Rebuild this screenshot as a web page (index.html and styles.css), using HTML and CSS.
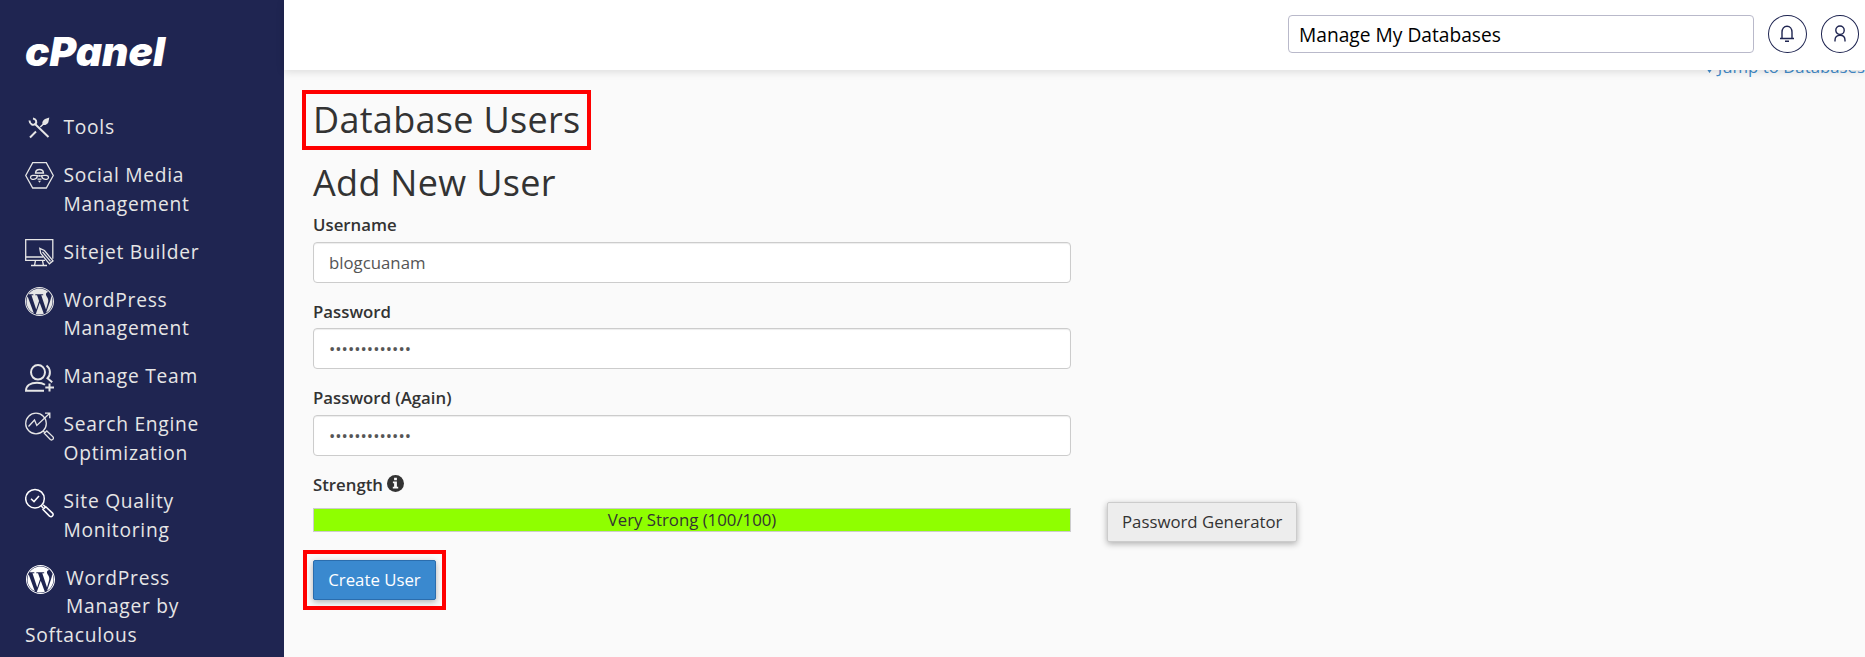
FILE: index.html
```html
<!DOCTYPE html>
<html lang="en">
<head>
    <meta charset="UTF-8">
    <meta name="viewport" content="width=device-width, initial-scale=1.0">
    <title>cPanel - Manage My Databases</title>
    <link rel="stylesheet" href="styles.css">
</head>
<body>
    <!-- shared WordPress mark, used twice in the menu -->
    <svg class="defs" width="0" height="0">
        <symbol id="wp" viewBox="0 0 24 24">
            <path d="M12 0C5.385 0 0 5.385 0 12s5.385 12 12 12 12-5.385 12-12S18.615 0 12 0zm0 .8c6.175 0 11.2 5.025 11.2 11.2S18.175 23.2 12 23.2.8 18.175.8 12 5.825.8 12 .8z"/>
            <path d="M21.469 6.825c.84 1.537 1.318 3.3 1.318 5.175 0 3.979-2.156 7.456-5.363 9.325l3.295-9.527c.615-1.54.82-2.771.82-3.864 0-.405-.026-.78-.07-1.11m-7.981.105c.647-.03 1.232-.105 1.232-.105.582-.075.514-.93-.067-.899 0 0-1.755.135-2.88.135-1.064 0-2.85-.15-2.85-.15-.585-.03-.661.855-.075.885 0 0 .54.061 1.125.09l1.68 4.605-2.37 7.08L5.354 6.9c.649-.03 1.234-.1 1.234-.1.585-.075.516-.93-.065-.896 0 0-1.746.138-2.874.138-.2 0-.438-.008-.69-.015C4.911 3.15 8.235 1.215 12 1.215c2.809 0 5.365 1.072 7.286 2.833-.046-.003-.091-.009-.141-.009-1.06 0-1.812.923-1.812 1.914 0 .89.513 1.643 1.06 2.531.411.72.89 1.643.89 2.977 0 .915-.354 1.994-.821 3.479l-1.075 3.585-3.9-11.61.001.014zM12 22.784c-1.059 0-2.081-.153-3.048-.437l3.237-9.406 3.315 9.087c.024.053.05.101.078.149-1.12.393-2.325.609-3.582.609M1.211 12c0-1.564.336-3.05.935-4.39L7.29 21.709C3.694 19.96 1.212 16.271 1.211 12"/>
        </symbol>
    </svg>

    <div class="sidebar">
        <svg class="logo" viewBox="0 0 142 34">
            <text x="0" y="30.500" textLength="140" lengthAdjust="spacingAndGlyphs">cPanel</text>
        </svg>
        <ul class="menu">
            <li>
                <svg class="icon" viewBox="0 0 29 34">
                    <path class="stroke-bold" d="M9.500 8.500L23.500 22M11 16.500L5 22.500"/>
                    <path class="stroke-bold" d="M4.500 5.500c.3 4 3.500 5.300 5.800 3.500 2-2 .7-5-2.300-5.500"/>
                    <path class="solid" d="M24.300 2.500l-4.300 1.500c-2 1-3 3-2.600 5l-2.600 2.600 1 1 2.600-2.600c2.300.2 4-.8 5-2.800z"/>
                </svg>
                Tools
            </li>
            <li>
                <svg class="icon" viewBox="0 0 29 34">
                    <path class="stroke" d="M7.700.7h13.600L28.300 13.500l-7 12.500H7.700L.7 13.500z"/>
                    <path class="stroke" d="M10.500 11c.3-4.700 7.700-4.700 8 0zM12.500 13.700c-3.500-.7-7-.5-7 1.600 0 3 6.300 3 7-1.600zM16.500 13.700c3.500-.7 7-.5 7 1.600 0 3-6.300 3-7-1.600zM12.500 17.200h4"/>
                    <path class="solid" d="M13 18.800h3l-1.500 2zM13.300 13h2.400v1.800h-2.400z"/>
                </svg>
                Social Media Management
            </li>
            <li>
                <svg class="icon icon-low" viewBox="0 0 29 34">
                    <path class="stroke" d="M20 21.300H.7V.7h27.100v19"/>
                    <path class="stroke" d="M1 18h17M10.500 21.500l-1 5M17.500 21.500l1 5M6 26.500h16"/>
                    <path class="stroke" d="M14.800 9.300l.9 5 8.700 10.500 3.600-3-8.600-10.300zM17.500 12.900l8 9.500"/>
                </svg>
                Sitejet Builder
            </li>
            <li>
                <svg class="icon solid" viewBox="0 0 29 34"><use href="#wp" width="29" height="29"/></svg>
                WordPress Management
            </li>
            <li>
                <svg class="icon icon-low" viewBox="0 0 29 34">
                    <ellipse class="stroke-bold" cx="13" cy="8.300" rx="7" ry="7.300"/>
                    <path class="stroke-bold" d="M19 26.800H1c0-5 4.500-8 11-8 3.500 0 6 .6 8 2"/>
                    <path class="stroke-bold" d="M21.500 1.500c4.200 3 4.500 9.500 1 12.700l4.700 4M24.500 19.500v8M20.300 23.500H29"/>
                </svg>
                Manage Team
            </li>
            <li>
                <svg class="icon" viewBox="0 0 29 34">
                    <circle class="stroke" cx="11" cy="11.500" r="10.300"/>
                    <path class="stroke" d="M3.500 14.500l6-6.500 2.300 5.500L24.500 1.500M20 1.200h4.800v5"/>
                    <path class="stroke" d="M18 18.700l2 2M19.300 21.300l2.500-2.300 6.200 5.800c1.300 2-.7 4-2.700 2.700z"/>
                </svg>
                Search Engine Optimization
            </li>
            <li>
                <svg class="icon icon-white" viewBox="0 0 29 34">
                    <circle class="stroke" cx="10" cy="10.700" r="9.300"/>
                    <path class="stroke" d="M6 10.800l3 2.800 5-5.600M16.300 18l2 2.200M18.200 16.800l2 2"/>
                    <path class="stroke" d="M18 21.500l2.800-2.700 6.700 6.300c1.700 2-.8 4.600-3 3z"/>
                </svg>
                Site Quality Monitoring
            </li>
            <li>
                <svg class="icon icon-wide solid-white" viewBox="0 0 29 34"><use href="#wp" width="29" height="29"/></svg>
                WordPress Manager by Softaculous
            </li>
        </ul>
    </div>

    <div class="main">
        <div class="header">
            <input type="text" class="search" value="Manage My Databases">
            <button class="round-button">
                <svg width="16" height="18" viewBox="0 0 16 18">
                    <path d="M1 13.500h14M3 13.500V7.200C3 3.700 5 1.200 8 1.200s5 2.500 5 6v6.300M6 16.300h4"/>
                </svg>
            </button>
            <button class="round-button">
                <svg width="14" height="18" viewBox="0 0 14 18">
                    <circle cx="7" cy="5.200" r="4.200"/>
                    <path d="M2 16.500v-1.300c0-3 2-5 5-5s5 2 5 5v1.300"/>
                </svg>
            </button>
        </div>

        <div class="content">
            <a class="jump" href="#">
                <svg width="7" height="14" viewBox="0 0 7 14"><path d="M2 0h3v9h2l-3.500 5L0 9h2z"/></svg>
                Jump to Databases
            </a>

            <h1 class="highlight">Database Users</h1>
            <h2>Add New User</h2>

            <label for="username">Username</label>
            <input type="text" id="username" class="field" value="blogcuanam">

            <label for="password">Password</label>
            <input type="password" id="password" class="field" value="abcdefghijklm">

            <label for="password2">Password (Again)</label>
            <input type="password" id="password2" class="field" value="abcdefghijklm">

            <div class="label-row">
                <label>Strength</label>
                <svg class="info" width="17" height="17" viewBox="0 0 17 17">
                    <circle cx="8.500" cy="8.500" r="8.500"/>
                    <path d="M7.100 2.800h2.800v2.400H7.100zM5.900 6.500h4v5.200h1.300v1.700H5.800v-1.700h1.300V8.200H5.900z"/>
                </svg>
            </div>
            <div class="strength-row">
                <div class="strength-bar">Very Strong (100/100)</div>
                <button class="btn">Password Generator</button>
            </div>

            <div class="highlight submit">
                <button class="btn btn-primary">Create User</button>
            </div>
        </div>
    </div>
</body>
</html>
```
FILE: styles.css
```css
* {
    box-sizing: border-box;
}
body {
    display: flex;
    height: 657px;
    margin: 0;
    overflow: hidden;
    font-family: "Open Sans", sans-serif;
    font-size: 16.8px;
    color: #333;
    background-color: #fafafa;
}
input, button {
    font-family: inherit;
    font-size: inherit;
}
.defs {
    position: absolute;
}

/* Sidebar */
.sidebar {
    flex: none;
    width: 284px;
    height: 657px;
    padding: 35px 25px 0;
    overflow: hidden;
    background-color: #1f2551;
    color: #e6e6e6;
}
.logo {
    display: block;
    width: 142px;
    height: 34px;
    overflow: visible;
}
.logo text {
    font-family: Inter, sans-serif;
    font-size: 40px;
    font-weight: 900;
    font-style: italic;
    fill: white;
}
.menu {
    list-style: none;
    margin: 44px 0 0;
    padding: 0;
    font-size: 19.2px;
    line-height: 28.75px;
    letter-spacing: 0.74px;
}
.menu li {
    margin-bottom: 19.2px;
}
.icon {
    float: left;
    width: 29px;
    height: 34px;
    margin: 1.5px 9.5px 0 0;
}
.icon-low {
    margin-bottom: -12px;
}
.icon-wide {
    margin-left: 1px;
    margin-right: 11px;
}
.stroke, .stroke-bold {
    fill: none;
    stroke: #e6e6e6;
    stroke-width: 1.3;
}
.stroke-bold {
    stroke-width: 2;
}
.icon-white .stroke {
    stroke: white;
    stroke-width: 1.5;
}
.solid {
    fill: #e6e6e6;
}
.solid-white {
    fill: white;
}

/* Top bar */
.main {
    flex: 1;
    min-width: 0;
}
.header {
    position: relative;
    z-index: 1;
    display: flex;
    align-items: center;
    justify-content: flex-end;
    gap: 14px;
    height: 70px;
    padding: 0 6px 2px 0;
    background-color: white;
    box-shadow: 0 2px 8px rgba(0,0,0,0.12);
}
.search {
    width: 466px;
    height: 38px;
    padding: 0 10px;
    border: 1px solid #b9b9ca;
    border-radius: 4px;
    font-size: 19.2px;
    color: black;
}
.round-button {
    display: flex;
    align-items: center;
    justify-content: center;
    width: 38.5px;
    height: 38px;
    padding: 0;
    border: 1px solid #1f2551;
    border-radius: 50%;
    background: white;
}
.round-button svg {
    fill: none;
    stroke: #1f2551;
    stroke-width: 1.4;
}

/* Database users form */
.content {
    padding: 0 0 0 29px;
}
.jump {
    display: block;
    height: 20px;
    margin-top: -13px;
    line-height: 20px;
    text-align: right;
    text-decoration: none;
    color: #428bca;
}
.jump svg {
    fill: #428bca;
}
.highlight {
    width: fit-content;
    border: 4px solid #ff0000;
}
h1, h2 {
    font-size: 36px;
    font-weight: 400;
    line-height: 40px;
    letter-spacing: 0.3px;
    margin: 0;
}
h1.highlight {
    width: 289px;
    height: 60px;
    margin: 13px 0 0 -11px;
    padding: 6px 7px;
    white-space: nowrap;
}
h2 {
    margin-top: 13px;
}
label {
    display: block;
    height: 24px;
    line-height: 24px;
    font-weight: 600;
}
h2 + label {
    margin-top: 10.3px;
}
.field {
    display: block;
    width: 758px;
    height: 41px;
    margin: 4.7px 0 16.8px;
    padding: 6px 15px;
    border: 1px solid #ccc;
    border-radius: 4px;
    box-shadow: inset 0 1px 1px rgba(0,0,0,0.075);
    background-color: white;
    color: #555;
}
.label-row {
    display: flex;
    gap: 4px;
}
.info {
    margin-top: 2px;
    fill: #333;
}
.info path {
    fill: #fafafa;
}
.strength-row {
    display: flex;
    align-items: flex-start;
    gap: 36px;
}
.strength-bar {
    width: 758px;
    height: 24px;
    margin-top: 11.2px;
    border: 1px solid #ccc;
    background-color: #8fff00;
    line-height: 22px;
    text-align: center;
}
.btn {
    height: 40px;
    margin-top: 5.2px;
    padding: 0 14px;
    border: 1px solid #ccc;
    border-radius: 2px;
    background-color: #ededed;
    box-shadow: 0 2px 6px rgba(0,0,0,0.3);
    color: #333;
}
.btn-primary {
    display: block;
    width: 123px;
    margin: 0;
    border-color: #2b6dad;
    background-color: #3a89cf;
    color: white;
}
.submit {
    height: 60px;
    margin: 8px 0 0 -10px;
    padding: 6px;
}
```
